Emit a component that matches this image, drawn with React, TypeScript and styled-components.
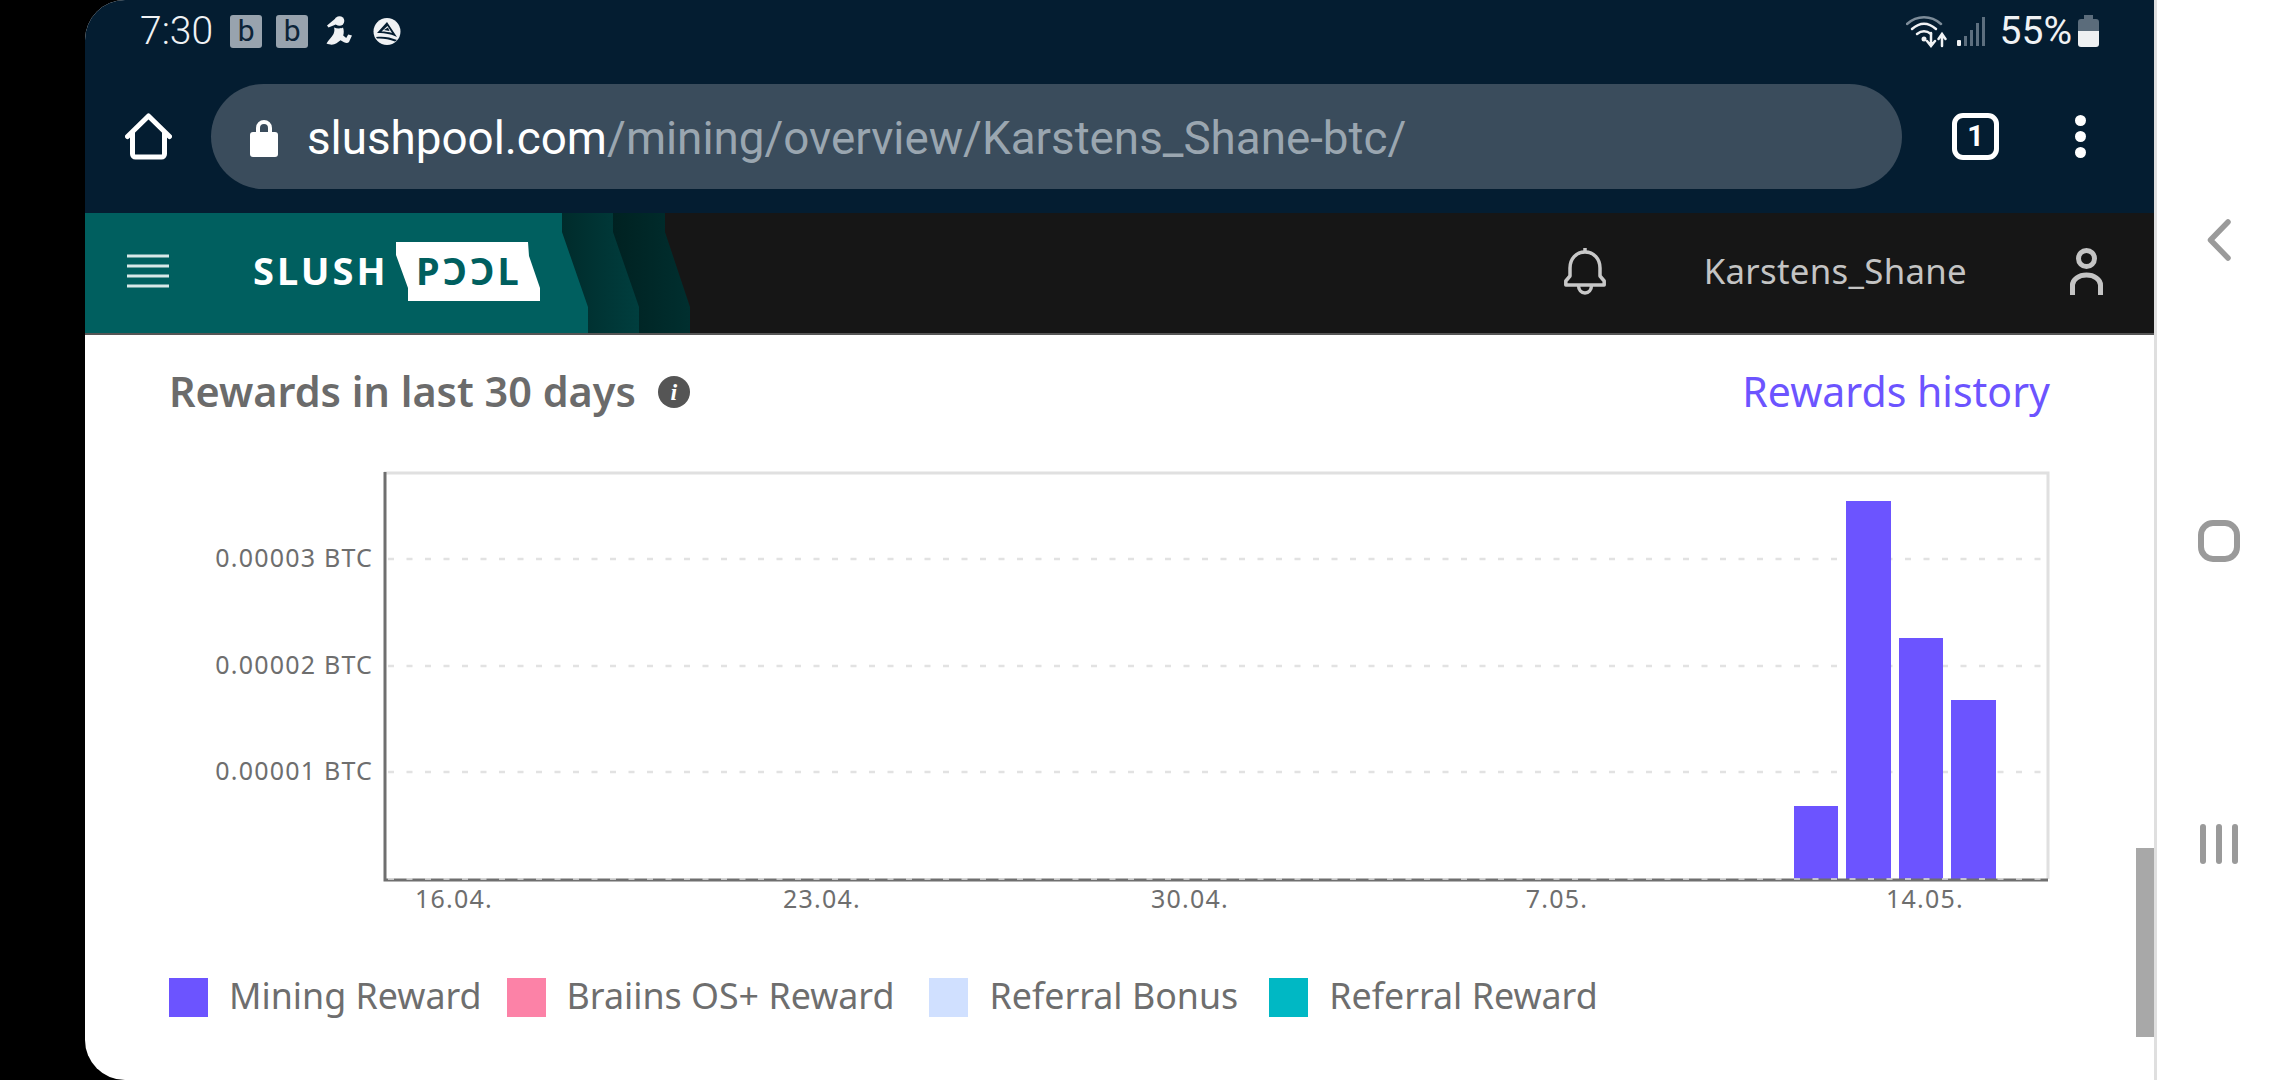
import styled, { createGlobalStyle } from "styled-components";

const GlobalStyle = createGlobalStyle`
  html, body {
    margin: 0;
    padding: 0;
    background: #000;
  }
  * {
    box-sizing: border-box;
  }
`;

const plexStack = `"Noto Sans", "Open Sans", sans-serif`;

const Page = styled.div`
  width: 2280px;
  height: 1080px;
  display: flex;
  background: #000;
  overflow: hidden;
`;

const Screen = styled.div`
  width: 2069px;
  margin-left: 85px;
  height: 1080px;
  display: flex;
  flex-direction: column;
  background: #fff;
  border-radius: 40px 0 0 40px;
  overflow: hidden;
`;

const Chrome = styled.div`
  height: 213px;
  background: #041d31;
  display: flex;
  flex-direction: column;
`;

const StatusBar = styled.div`
  height: 84px;
  padding: 0 55px 22px 55px;
  display: flex;
  align-items: center;
  color: #f0f2f4;
  font-family: Roboto, sans-serif;
`;

const Clock = styled.span`
  font-size: 39px;
  font-weight: 300;
  margin-right: 17px;
`;

const NotifyBadge = styled.span`
  width: 32px;
  height: 33px;
  margin-right: 14px;
  border-radius: 3px;
  background: #98a3ae;
  color: #0c2438;
  font-size: 30px;
  line-height: 31px;
  text-align: center;
`;

const StatusRight = styled.div`
  margin-left: auto;
  display: flex;
  align-items: center;
`;

const Percent = styled.span`
  font-size: 39px;
  margin: 0 6px 0 15px;
`;

const UrlRow = styled.div`
  flex: 1;
  display: flex;
  padding: 0 0 24px 40px;
  align-items: center;
`;

const AddressPill = styled.div`
  width: 1691px;
  height: 105px;
  margin-left: 39px;
  border-radius: 53px;
  background: #3a4c5c;
  display: flex;
  align-items: center;
  padding: 3px 0 0 39px;
  font-family: Roboto, sans-serif;
  font-size: 45.75px;
  color: #9aa6b0;
`;

const Host = styled.span`
  color: #fff;
  margin-left: 29px;
`;

const TabButton = styled.div`
  width: 47px;
  height: 47px;
  margin-left: 50px;
  border: 5px solid #fff;
  border-radius: 11px;
  color: #fff;
  font-family: Roboto, sans-serif;
  font-weight: 700;
  font-size: 29px;
  line-height: 37px;
  text-align: center;
`;

const MenuDots = styled.div`
  margin-left: 76px;
  display: flex;
  flex-direction: column;
  gap: 5px;

  span {
    width: 11px;
    height: 11px;
    border-radius: 50%;
    background: #fff;
  }
`;

const SiteHeader = styled.div`
  height: 122px;
  flex: none;
  background: #161616;
  border-bottom: 2px solid #555;
  display: flex;
  align-items: center;
  padding: 0 51px 3px 0;
  font-family: ${plexStack};
`;

const Brand = styled.div`
  width: 610px;
  height: 120px;
  flex: none;
  align-self: flex-start;
  margin-right: auto;
`;

const UserName = styled.span`
  font-size: 34.8px;
  color: #c4c4c4;
  margin: 0 103px 2px 0;
  letter-spacing: 0.3px;
`;

const Content = styled.div`
  flex: 1;
  position: relative;
  padding: 29px 0 0 85px;
  font-family: ${plexStack};
`;

const TitleRow = styled.div`
  width: 1880px;
  height: 54px;
  margin-bottom: 42px;
  display: flex;
  align-items: center;
`;

const Title = styled.h2`
  margin: 0 0 0 -1px;
  font-size: 41.4px;
  font-weight: 600;
  color: #6b6b6b;
`;

const InfoDot = styled.span`
  width: 32px;
  height: 32px;
  margin: 2px 0 0 22px;
  border-radius: 50%;
  background: #555;
  color: #fff;
  font-family: "Liberation Serif", serif;
  font-style: italic;
  font-weight: 700;
  font-size: 24px;
  line-height: 32px;
  text-align: center;
`;

const HistoryLink = styled.a`
  margin-left: auto;
  font-size: 41px;
  color: #6c54ff;
`;

const ChartFrame = styled.svg`
  display: block;
`;

const Legend = styled.div`
  display: flex;
  align-items: center;
  margin: 46px 0 0 -1px;
`;

const LegendItem = styled.div<{ $gap: number }>`
  display: flex;
  align-items: center;
  margin-right: ${(p) => p.$gap}px;
  font-size: 35.8px;
  color: #6e6e6e;
`;

const LegendLabel = styled.span`
  margin-top: -5px;
`;

const Swatch = styled.span<{ $color: string }>`
  width: 39px;
  height: 39px;
  margin-right: 21px;
  background: ${(p) => p.$color};
`;

const ScrollThumb = styled.div`
  position: absolute;
  right: 0;
  top: 513px;
  width: 18px;
  height: 189px;
  background: #a8a8a8;
`;

const NavRail = styled.div`
  flex: 1;
  background: #fff;
  border-left: 3px solid #dfdfdf;
  display: flex;
  flex-direction: column;
  align-items: center;
  padding-top: 219px;
`;

const HomeSquare = styled.div`
  width: 42px;
  height: 42px;
  margin: 259px 0 262px;
  border: 6px solid #9a9a9a;
  border-radius: 15px;
`;

const RecentBars = styled.div`
  display: flex;
  gap: 10px;

  span {
    width: 6px;
    height: 40px;
    border-radius: 3px;
    background: #9a9a9a;
  }
`;

const bars = [
  { x: 1794, w: 44, top: 806 },
  { x: 1846, w: 45, top: 501 },
  { x: 1899, w: 44, top: 638 },
  { x: 1951, w: 45, top: 700 },
];

const yTicks = [
  { y: 559, label: "0.00003 BTC" },
  { y: 666, label: "0.00002 BTC" },
  { y: 772, label: "0.00001 BTC" },
];

const xTicks = [
  { x: 454, label: "16.04." },
  { x: 822, label: "23.04." },
  { x: 1190, label: "30.04." },
  { x: 1557, label: "7.05." },
  { x: 1925, label: "14.05." },
];

const legend = [
  { label: "Mining Reward", color: "#6c54ff", gap: 25 },
  { label: "Braiins OS+ Reward", color: "#fc82a7", gap: 35 },
  { label: "Referral Bonus", color: "#d0e0ff", gap: 31 },
  { label: "Referral Reward", color: "#00b8c4", gap: 0 },
];

const HomeIcon = () => (
  <svg width="47" height="47" viewBox="0 0 47 47" fill="none">
    <path
      d="M2.500 23.500 23.500 3 44.500 23.500M7.500 20V41a3 3 0 0 0 3 3H36.500a3 3 0 0 0 3-3V20"
      stroke="#fff"
      strokeWidth="5"
      strokeLinejoin="round"
      strokeLinecap="round"
    />
  </svg>
);

const LockIcon = () => (
  <svg width="28" height="38" viewBox="0 0 28 38">
    <path d="M8 14V9a6 6 0 0 1 12 0v5" stroke="#fff" strokeWidth="4" fill="none" />
    <rect x="0" y="13" width="28" height="25" rx="3" fill="#fff" />
  </svg>
);

const WomanIcon = () => (
  <svg width="27" height="31" viewBox="0 0 27 31" fill="#f0f2f4" style={{ margin: "0 20px 0 4px" }}>
    <circle cx="13.500" cy="5" r="4.800" />
    <path d="M10 2 1 9.500l1.500 2L11 8z" />
    <path d="M8 11.500c3 1.200 7 1.200 9 0 1 3 1 5 .2 8l3 2.500 2-3.500 3.800 1-3 6.500c-1 1.400-3 1.400-5 .3l-3.500-2-4 3c-3 2-7 1.500-10 .2 2-3.500 5-6 7-9.500 1-2.200 1.200-4.500.5-6.500z" />
  </svg>
);

const DiscIcon = () => (
  <svg width="28" height="27" viewBox="0 0 28 27">
    <circle cx="14" cy="13.500" r="13.500" fill="#f0f2f4" />
    <path d="M4 15 14 4 24 19C20 17 14 15 4 15z" fill="#041d31" />
    <path d="M8.500 13.500 14.500 8 19 15C16 14 12 13.500 8.500 13.500z" fill="#f0f2f4" />
    <path d="M11 12 15 9.500 16.500 13z" fill="#041d31" />
    <path d="M3 19c7-1 14 0 21 3l-2 1.500c-6-2.500-13-3.500-18-3z" fill="#041d31" />
  </svg>
);

const WifiIcon = () => (
  <svg width="42" height="33" viewBox="0 0 42 33" fill="none" strokeLinecap="round">
    <path d="M1 9C11 0 25 0 35 9" stroke="#7d8c99" strokeWidth="2.500" />
    <path d="M6 14C14 7 22 7 30 14" stroke="#f0f2f4" strokeWidth="2.500" />
    <path d="M11 19C16 15 20 15 25 19" stroke="#f0f2f4" strokeWidth="2.500" />
    <circle cx="18" cy="24" r="2.500" fill="#f0f2f4" />
    <path d="M25 18v12M21 26l4 5 4-5M36 31V20M32.500 24l3.500-5 3.500 5" stroke="#f0f2f4" strokeWidth="2.500" />
  </svg>
);

const SignalIcon = () => (
  <svg width="28" height="29" viewBox="0 0 28 29" style={{ marginLeft: 9 }}>
    <rect x="0" y="23" width="4" height="6" rx="1" fill="#f0f2f4" />
    <rect x="7" y="19" width="3" height="10" fill="#5d6f7f" />
    <rect x="13" y="13" width="3" height="16" fill="#5d6f7f" />
    <rect x="19" y="6" width="3" height="23" fill="#5d6f7f" />
    <rect x="25" y="0" width="3" height="29" fill="#5d6f7f" />
  </svg>
);

const BatteryIcon = () => (
  <svg width="21" height="32" viewBox="0 0 21 32">
    <path d="M6 0h9v4h3a3 3 0 0 1 3 3v9H0V7a3 3 0 0 1 3-3h3z" fill="#5b6c7b" />
    <path d="M0 16h21v13a3 3 0 0 1-3 3H3a3 3 0 0 1-3-3z" fill="#eef0f2" />
  </svg>
);

const BellIcon = () => (
  <svg
    width="42"
    height="47"
    viewBox="0 0 42 47"
    fill="none"
    stroke="#c8c8c8"
    strokeWidth="3.500"
    strokeLinejoin="round"
    style={{ marginRight: 98 }}
  >
    <path d="M21 4C12 4 6 11 6 20v8L1.800 33v4h38.400v-4L36 28v-8C36 11 30 4 21 4z" />
    <path d="M21 0v4" />
    <path d="M14.500 37c0 5 3 8 6.500 8s6.500-3 6.500-8" />
  </svg>
);

const UserIcon = () => (
  <svg width="33" height="47" viewBox="0 0 33 47" fill="none" stroke="#c4c4c4" strokeWidth="5">
    <circle cx="16.500" cy="10.500" r="8" />
    <path d="M2.500 47V37a14 10 0 0 1 28 0v10" />
  </svg>
);

const ChevronIcon = () => (
  <svg width="24" height="42" viewBox="0 0 24 42" fill="none">
    <path d="M21 3 3.500 21 21 39" stroke="#9a9a9a" strokeWidth="5.500" strokeLinecap="round" strokeLinejoin="round" />
  </svg>
);

// header logo and the dark shards behind it
const BrandArt = () => (
  <svg width="610" height="120" viewBox="85 213 610 120">
    <defs>
      <linearGradient id="shardA" x1="0" x2="1" y1="0" y2="0">
        <stop offset="0" stopColor="#002828" />
        <stop offset="1" stopColor="#003e3e" />
      </linearGradient>
      <linearGradient id="shardB" x1="0" x2="1" y1="0" y2="0">
        <stop offset="0" stopColor="#001f1f" />
        <stop offset="1" stopColor="#002f2f" />
      </linearGradient>
    </defs>
    <path d="M600 213H665V232L690 307V333H600z" fill="url(#shardB)" />
    <path d="M550 213H613V232L639 307V333H550z" fill="url(#shardA)" />
    <path d="M85 213H562V232L588 307V333H85z" fill="#005f5f" />
    <path d="M127 256H169M127 266H169M127 276H169M127 286H169" stroke="#d8e8e8" strokeWidth="3" />
    <text x="253" y="285" fontFamily="'Noto Sans', sans-serif" fontWeight="700" fontSize="38" letterSpacing="3" fill="#fff">
      SLUSH
    </text>
    <path d="M396 242H528L529 256 540 288V301H408V288L396 255z" fill="#fff" />
    <text x="416" y="285" fontFamily="'Noto Sans', sans-serif" fontWeight="700" fontSize="38" letterSpacing="3" fill="#005f5f">
      PƆƆL
    </text>
  </svg>
);

const RewardsChart = () => (
  <ChartFrame width="1900" height="470" viewBox="170 460 1900 470">
    <path d="M384 473H2048V879" fill="none" stroke="#e0e0e0" strokeWidth="3" />
    {yTicks.map((t) => (
      <g key={t.label}>
        <line x1="388" x2="2045" y1={t.y} y2={t.y} stroke="#e2e2e2" strokeWidth="2.500" strokeDasharray="6 12.500" />
        <text x="373" y={t.y + 8} textAnchor="end" fontSize="25" letterSpacing="1.200" fill="#6e6e6e" fontFamily="'Noto Sans', sans-serif">
          {t.label}
        </text>
      </g>
    ))}
    {bars.map((b) => (
      <rect key={b.x} x={b.x} y={b.top} width={b.w} height={879 - b.top} fill="#6c54ff" />
    ))}
    <path d="M385 472V880H2048" fill="none" stroke="#6f6f6f" strokeWidth="3" />
    <line x1="388" x2="2048" y1="879" y2="879" stroke="#e2e2e2" strokeWidth="1.500" strokeDasharray="6 12.500" />
    {xTicks.map((t) => (
      <text key={t.label} x={t.x} y="908" textAnchor="middle" fontSize="25" letterSpacing="1.200" fill="#6e6e6e" fontFamily="'Noto Sans', sans-serif">
        {t.label}
      </text>
    ))}
  </ChartFrame>
);

export default function App() {
  return (
    <Page>
      <GlobalStyle />
      <Screen>
        <Chrome>
          <StatusBar>
            <Clock>7:30</Clock>
            <NotifyBadge>b</NotifyBadge>
            <NotifyBadge>b</NotifyBadge>
            <WomanIcon />
            <DiscIcon />
            <StatusRight>
              <WifiIcon />
              <SignalIcon />
              <Percent>55%</Percent>
              <BatteryIcon />
            </StatusRight>
          </StatusBar>
          <UrlRow>
            <HomeIcon />
            <AddressPill>
              <LockIcon />
              <Host>slushpool.com</Host>
              /mining/overview/Karstens_Shane-btc/
            </AddressPill>
            <TabButton>1</TabButton>
            <MenuDots>
              <span />
              <span />
              <span />
            </MenuDots>
          </UrlRow>
        </Chrome>
        <SiteHeader>
          <Brand>
            <BrandArt />
          </Brand>
          <BellIcon />
          <UserName>Karstens_Shane</UserName>
          <UserIcon />
        </SiteHeader>
        <Content>
          <TitleRow>
            <Title>Rewards in last 30 days</Title>
            <InfoDot>i</InfoDot>
            <HistoryLink>Rewards history</HistoryLink>
          </TitleRow>
          <RewardsChart />
          <Legend>
            {legend.map((l) => (
              <LegendItem key={l.label} $gap={l.gap}>
                <Swatch $color={l.color} />
                <LegendLabel>{l.label}</LegendLabel>
              </LegendItem>
            ))}
          </Legend>
          <ScrollThumb />
        </Content>
      </Screen>
      <NavRail>
        <ChevronIcon />
        <HomeSquare />
        <RecentBars>
          <span />
          <span />
          <span />
        </RecentBars>
      </NavRail>
    </Page>
  );
}
